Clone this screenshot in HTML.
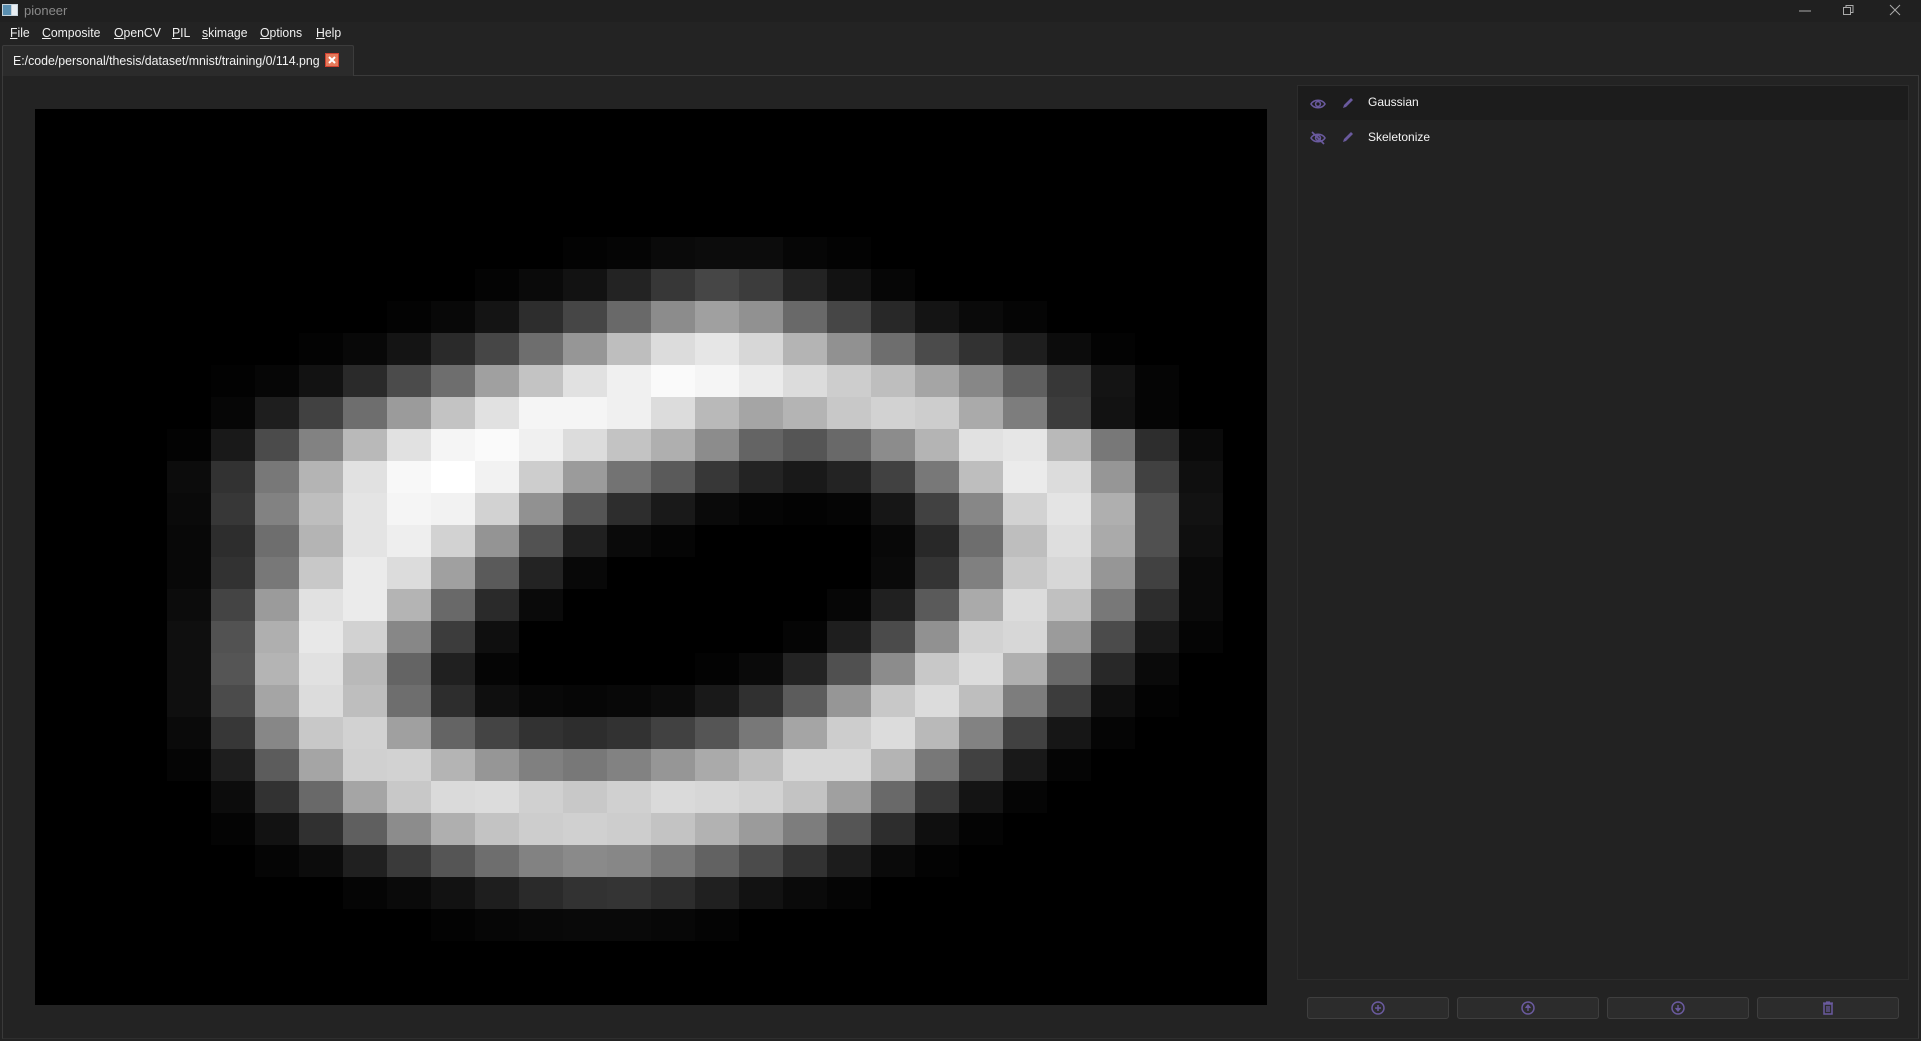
<!DOCTYPE html>
<html><head><meta charset="utf-8">
<style>
*{margin:0;padding:0;box-sizing:border-box}
html,body{width:1921px;height:1041px;overflow:hidden;background:#232323;font-family:"Segoe UI","Liberation Sans","DejaVu Sans",sans-serif;color:#e8e8e8}
.abs{position:absolute}
#title{left:0;top:0;width:1921px;height:22px;background:#202020}
#menu span{position:absolute;top:25px;font-size:13px;color:#f0f0f0;display:inline-block;transform:scaleX(0.94);transform-origin:left}
#menu u{text-decoration:underline}
#tab{left:2px;top:45px;width:352px;height:31px;background:#2b2b2b;border:1px solid #3c3c3c;border-bottom:none;border-radius:2px 2px 0 0}
#tab span{position:absolute;left:10px;top:7px;font-size:13px;color:#f2f2f2;display:inline-block;white-space:nowrap;transform:scaleX(0.95);transform-origin:left}
#frame{left:2px;top:75px;width:1917px;height:964px;border:1px solid #3a3a3a;border-bottom-color:#2e2e2e}
#img{left:35px;top:109px;width:1232px;height:896px;background:#000}
#panel{left:1297px;top:85px;width:612px;height:895px;border:1px solid #2c2c2c;background:#222}
.row{position:absolute;left:0;width:610px;height:34px}
.row span{position:absolute;left:70px;top:9px;font-size:12px;color:#f4f4f4}
.btn{position:absolute;top:997px;width:142px;height:22px;background:#2c2c2c;border:1px solid #3f3f3f;border-radius:3px}
.btn svg{position:absolute;left:62px;top:2px}
</style></head><body>
<div id="title" class="abs">
 <svg class="abs" style="left:2px;top:4px" width="16" height="12"><rect x="0" y="0" width="16" height="12" fill="#c8d4dc"/><rect x="1" y="1" width="8" height="10" fill="#5a8fb0"/><rect x="10" y="1" width="5" height="10" fill="#e8eef2"/></svg>
 <span class="abs" style="left:24px;top:3px;font-size:13px;color:#8a8a8a">pioneer</span>
 <svg class="abs" style="left:1798px;top:6px" width="14" height="10"><line x1="1" y1="5" x2="13" y2="5" stroke="#aaa" stroke-width="1"/></svg>
 <svg class="abs" style="left:1843px;top:4px" width="12" height="12"><rect x="0.5" y="3.5" width="7" height="7" fill="none" stroke="#aaa"/><path d="M3 3.5V1.5h7v7H8" fill="none" stroke="#aaa"/></svg>
 <svg class="abs" style="left:1889px;top:4px" width="12" height="12"><path d="M1 1L11 11M11 1L1 11" stroke="#aaa" stroke-width="1"/></svg>
</div>
<div id="menu">
 <span style="left:10px"><u>F</u>ile</span>
 <span style="left:42px"><u>C</u>omposite</span>
 <span style="left:114px"><u>O</u>penCV</span>
 <span style="left:172px"><u>P</u>IL</span>
 <span style="left:202px"><u>s</u>kimage</span>
 <span style="left:260px"><u>O</u>ptions</span>
 <span style="left:316px"><u>H</u>elp</span>
</div>
<div id="frame" class="abs"></div>
<div id="tab" class="abs"><span>E:/code/personal/thesis/dataset/mnist/training/0/114.png</span>
 <svg class="abs" style="left:322px;top:7px" width="14" height="14"><rect x="0.5" y="0.5" width="13" height="13" fill="#e57a5a" stroke="#d04030"/><path d="M4 4L10 10M10 4L4 10" stroke="#fff" stroke-width="2"/></svg>
</div>
<div id="img" class="abs"></div>
<div id="panel" class="abs">
 <div class="row" style="top:0;background:#1c1c1c">
  <svg class="abs" style="left:12px;top:11px" width="16" height="14"><path d="M1 7C4 2 12 2 15 7C12 12 4 12 1 7Z" fill="none" stroke="#6a5a9e" stroke-width="1.6"/><circle cx="8" cy="7" r="2.4" fill="none" stroke="#6a5a9e" stroke-width="1.6"/></svg>
  <svg class="abs" style="left:43px;top:10px" width="13" height="14"><path d="M2 12L3 9L10 2L12 4L5 11Z" fill="#6a5a9e"/></svg>
  <span>Gaussian</span></div>
 <div class="row" style="top:35px">
  <svg class="abs" style="left:12px;top:10px" width="16" height="14"><path d="M1 7C4 2 12 2 15 7C12 12 4 12 1 7Z" fill="none" stroke="#6a5a9e" stroke-width="1.6"/><circle cx="8" cy="7" r="2.4" fill="none" stroke="#6a5a9e" stroke-width="1.6"/><path d="M2 1L14 13" stroke="#6a5a9e" stroke-width="1.6"/></svg>
  <svg class="abs" style="left:43px;top:9px" width="13" height="14"><path d="M2 12L3 9L10 2L12 4L5 11Z" fill="#6a5a9e"/></svg>
  <span>Skeletonize</span></div>
</div>
<div class="btn" style="left:1307px"><svg width="16" height="16"><circle cx="8" cy="8" r="6" fill="none" stroke="#6a5a9e" stroke-width="1.5"/><path d="M8 5V11M5 8H11" stroke="#6a5a9e" stroke-width="1.5"/></svg></div>
<div class="btn" style="left:1457px"><svg width="16" height="16"><circle cx="8" cy="8" r="6" fill="none" stroke="#6a5a9e" stroke-width="1.5"/><path d="M8 11V6M5.5 8L8 5L10.5 8" fill="#6a5a9e" stroke="#6a5a9e" stroke-width="1.3"/></svg></div>
<div class="btn" style="left:1607px"><svg width="16" height="16"><circle cx="8" cy="8" r="6" fill="none" stroke="#6a5a9e" stroke-width="1.5"/><path d="M8 5V10M5.5 8L8 11L10.5 8" fill="#6a5a9e" stroke="#6a5a9e" stroke-width="1.3"/></svg></div>
<div class="btn" style="left:1757px"><svg width="16" height="16"><rect x="4" y="4" width="8" height="10" fill="none" stroke="#6a5a9e" stroke-width="1.5"/><path d="M3 3H13M6 2H10M7 6V12M9 6V12" stroke="#6a5a9e" stroke-width="1.3"/></svg></div>
<script>
var R={
4:[0,0,0,0,0,0,0,0,0,3,5,10,12,12,6,3],
5:[0,0,0,0,0,0,0,4,10,18,35,55,70,60,35,18,6],
6:[0,0,0,0,0,3,8,20,45,70,105,140,160,145,105,70,40,20,10,5],
7:[0,0,0,3,8,20,42,70,110,150,190,220,230,215,180,145,110,75,50,30,12,3],
8:[0,2,6,18,42,75,110,160,195,225,240,250,245,235,220,205,190,165,135,95,55,20,5],
9:[0,6,30,65,110,155,195,225,245,245,240,220,185,165,180,200,210,205,170,125,60,18,5],
10:[3,25,75,130,185,225,245,250,240,220,195,175,140,100,85,105,140,180,225,230,185,120,45,10],
11:[12,50,120,180,225,248,255,242,205,155,115,90,55,35,25,35,65,120,190,235,220,150,65,15],
12:[10,55,130,190,228,245,242,210,145,85,45,25,10,5,3,5,22,65,135,210,228,175,80,18],
13:[8,45,110,180,228,238,210,148,82,32,10,5,0,0,0,0,8,40,110,190,222,170,80,15],
14:[8,50,120,200,235,220,160,90,35,8,0,0,0,0,0,0,10,52,128,200,215,150,65,10],
15:[12,68,155,225,235,180,105,42,10,0,0,0,0,0,0,6,32,90,170,220,192,120,45,10],
16:[15,82,175,232,210,135,60,15,0,0,0,0,0,0,5,30,75,145,210,215,155,75,25,5],
17:[15,85,180,225,185,100,32,5,0,0,0,0,3,10,35,80,140,200,220,175,105,40,10],
18:[15,75,165,220,190,110,45,15,8,6,8,12,25,48,92,150,200,220,190,125,60,15,3],
19:[10,55,135,200,210,160,100,68,50,45,50,65,85,120,165,205,220,185,130,65,22,5],
20:[5,30,92,165,208,210,180,150,128,120,130,150,170,190,215,215,180,120,65,25,5],
21:[0,12,50,105,165,200,218,220,208,200,208,218,215,210,195,160,105,55,20,5],
22:[0,4,18,48,95,140,175,195,205,208,205,195,178,155,125,85,45,15,4],
23:[0,0,5,12,32,58,85,110,130,138,135,120,98,75,50,28,10,3],
24:[0,0,0,0,5,10,18,30,42,50,52,45,32,18,10,5],
25:[0,0,0,0,0,0,3,6,8,9,9,7,4]};
var h='';
for(var r in R){var a=R[r];for(var k=0;k<a.length;k++){var v=a[k];if(!v)continue;
h+='<div style="position:absolute;left:'+((k+3)*44)+'px;top:'+(r*32)+'px;width:44px;height:32px;background:rgb('+v+','+v+','+v+')"></div>';}}
document.getElementById('img').innerHTML=h;
</script>
</body></html>
